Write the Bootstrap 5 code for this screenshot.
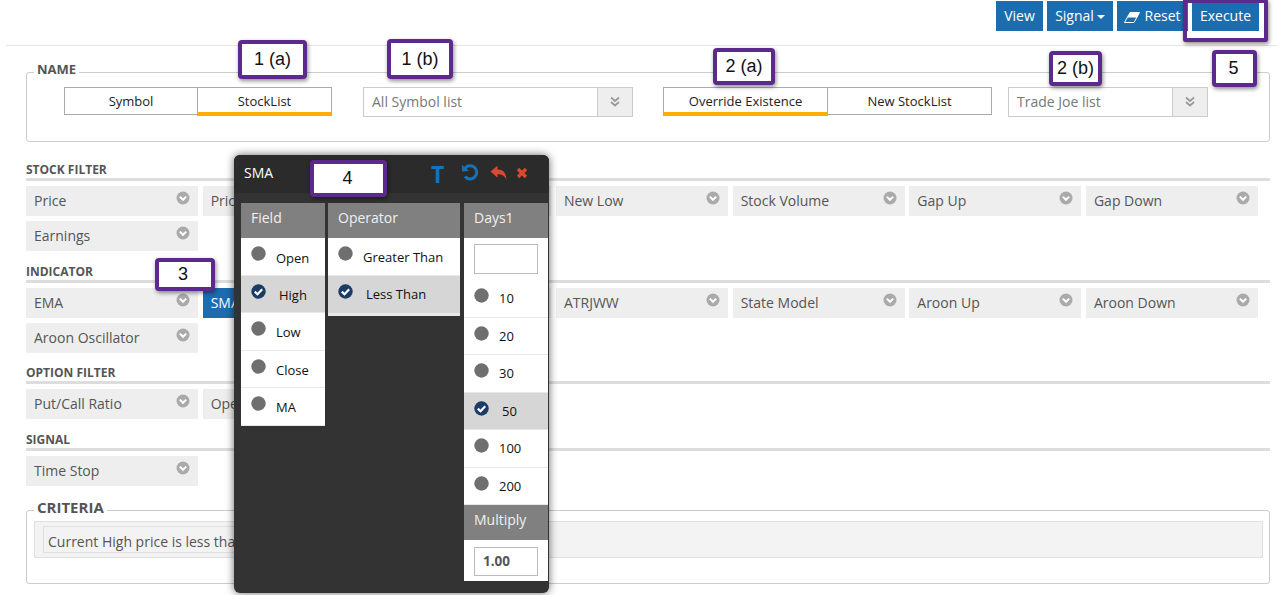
<!DOCTYPE html>
<html lang="en">
<head>
<meta charset="utf-8">
<title>Scan</title>
<link href="https://cdn.jsdelivr.net/npm/bootstrap@5.3.0/dist/css/bootstrap.min.css" rel="stylesheet">
<style>
html,body{height:595px;overflow:hidden;background:#fff}
body{font-family:"Open Sans","Liberation Sans",sans-serif;font-size:14px;color:#555;position:relative}
.topbar{height:30px;margin-top:1px;padding-right:18px}
.tb-btn{height:30px;padding:0;font-size:14px;line-height:30px;border:0;border-radius:0;background:#1b6db0;color:#fff;font-family:inherit;white-space:nowrap;flex:none}
.tb-btn:hover{background:#1b6db0;color:#fff}
.tb-btn.dropdown-toggle::after{vertical-align:2px;margin-left:3px;border-top-width:4px;border-left-width:4px;border-right-width:4px}
.tb-view{width:47px}
.tb-signal{width:66px}
.tb-reset{width:71px}
.tb-exec{width:67px}
.top-rule{height:1px;background:#e5e5e5;margin:14px 0 0 6px}
.fs{border:1px solid #ccc;border-radius:3px;margin:0 7px 0 26px;min-width:0;padding:0}
.fs legend{float:none;width:auto;padding:0 3px 6px;font-weight:700;color:#555;text-transform:uppercase}
.fs-name{margin-top:14px;padding:3px 0 24px 37px}
.fs-name legend{font-size:13px;line-height:18px;margin:0 0 0 -30px}
.seg{width:268px;flex:none}
.seg-wide{width:329px}
.btn-group>.seg-btn{height:28px;padding:0;flex:1 1 0;min-width:0;border:1px solid #aaa;border-radius:0;background:#fff;color:#222;font-size:13px;line-height:25px;font-family:inherit}
.btn-group>.seg-btn+.seg-btn{margin-left:-1px}
.btn-group>.seg-first{flex:0 0 134px}
.btn-group>.seg-on{height:29px;padding-top:1px;border-bottom:4px solid #fdae00}
.pick{height:30px;border:1px solid #ccc;flex:none;color:#777;background:#fff}
.pick-a{width:270px;margin:0 30px 0 31px}
.pick-b{width:200px;margin-left:16px}
.pick-text{padding-left:8px;line-height:28px;font-size:14px}
.pick-arrow{width:35px;background:#eee;border-left:1px solid #ccc}
.sect{margin:0 7px 0 26px}
.sect-title{margin:0;height:21px;padding-top:1px;border-bottom:3px solid #ddd;font-size:12px;line-height:18px;font-weight:700;color:#555;text-transform:uppercase}
.tiles{display:grid;grid-template-columns:repeat(7,172px);gap:5px 4.67px;margin-top:5px}
.tile{height:30px;background:#eee;padding:0 8px;line-height:29px;color:#555;font-size:14px;white-space:nowrap;overflow:hidden}
.tile svg{margin-top:5px;flex:none}
.tile-on{background:#1b6db0;color:#fff}
.mt-a{margin-top:18px}
.mt-b{margin-top:11px}
.mt-c{margin-top:10px}
.fs-crit{margin-top:11px;padding:0 6px 25px 7px}
.fs-crit legend{font-size:15px;line-height:20px;margin:0}
.crit-box{height:37px;margin-top:-2px;background:#f3f3f3;border:1px solid #e0e0e0;padding:4px 8px}
.crit-line{display:inline-block;height:27px;padding:0 4px;border:1px solid #e0e0e0;line-height:29px;color:#555;font-size:14px;white-space:nowrap}
.popup{position:absolute;left:234px;top:155px;width:315px;height:438px;background:#333;border-radius:6px;box-shadow:0 0 8px rgba(0,0,0,.6)}
.pop-head{height:38px;background:#2b2b2b;border-radius:6px 6px 0 0;padding-left:10px;color:#fff;font-size:14px;line-height:36px}
.pop-t{position:absolute;left:197px;top:5px;font:700 23px/28px "Open Sans",sans-serif;color:#1473bd}
.pop-ic{position:absolute;top:8px}
.pop-re{left:227px}
.pop-back{left:256px;top:10px}
.pop-x{left:282px;top:12px}
.pop-body{padding:10px 0 0 7px;gap:3px}
.pcol{flex:none;width:84px}
.pcol-w{width:132px}
.pcol-r{margin-left:1px}
.phead{height:35px;background:#808080;color:#f0f0f0;font-size:14px;line-height:29px;padding-left:10px}
.popt{height:37.5px;background:#fff;border-bottom:1px solid #e8e8e8;padding:8px 0 0 10px;color:#111;font-size:13px;border-radius:0}
.popt>span{margin:2px 0 0 10px;line-height:18px}
.popt:first-child>span{margin-top:3px}
.pcol-w .popt:first-child>span{margin-top:2px}
.pcol-r .popt>span,.pcol-r .popt:first-child>span{margin-top:1px}
.popt svg{flex:none}
.popt-on{background:#d6d6d6}
.popt-on>span{margin-left:13px}
.popt-end{height:40.5px;border-bottom:3px solid #e8e8e8}
.popt-end>span{margin-top:1px}
.pin{height:42px;background:#fff;padding:6px 10px 0}
.pin-last{height:41px;padding-top:7px}
.pinbox{display:block;width:64px;height:30px;border:1px solid #bbb;padding:0 8px;font:700 13.5px/28px "Open Sans",sans-serif;color:#555;background:#fff}
.pin-last .pinbox{height:29px;line-height:27px}
.tag{position:absolute;background:#fff;border:4px solid #5c2a8c;border-radius:4px;box-shadow:1px 2px 4px rgba(0,0,0,.45);color:#111;font:18px/1 "Liberation Sans",Arial,sans-serif;display:flex;align-items:center;justify-content:center;padding-bottom:1px}
.tag-1a{left:238px;top:40px;width:69px;height:39px}
.tag-1b{left:387px;top:39px;width:66px;height:40px}
.tag-2a{left:713px;top:48px;width:62px;height:37px}
.tag-2b{left:1049px;top:51px;width:53px;height:35px}
.tag-5{left:1212px;top:50px;width:45px;height:37px;padding-right:2px}
.tag-4{left:310px;top:160px;width:77px;height:37px;padding-right:2px}
.tag-3{left:155px;top:258px;width:60px;height:33px;padding-right:4px}
.tag-box{position:absolute;left:1183px;top:-1px;width:85px;height:43px;border:4px solid #5c2a8c;border-radius:2px;box-shadow:1px 2px 4px rgba(0,0,0,.45)}
</style>
</head>
<body>
<svg width="0" height="0" class="position-absolute">
  <defs>
    <symbol id="ic-chev" viewBox="0 0 14 14"><circle cx="7" cy="7" r="6.500" fill="#aaa"/><path d="M3.800 5.600 7 8.800l3.200-3.200" fill="none" stroke="#fff" stroke-width="2"/></symbol>
    <symbol id="ic-dbl" viewBox="0 0 12 12"><path d="M2 1.500 6 5l4-3.500M2 6 6 9.500 10 6" fill="none" stroke="#999" stroke-width="1.700"/></symbol>
    <symbol id="ic-off" viewBox="0 0 15 15"><circle cx="7.500" cy="7.500" r="7.200" fill="#6f6f6f"/></symbol>
    <symbol id="ic-on" viewBox="0 0 15 15"><circle cx="7.500" cy="7.500" r="7.200" fill="#1a3c66"/><path d="M3.800 7.600 6.500 10.200 11.200 5.300" fill="none" stroke="#fff" stroke-width="2.200"/></symbol>
  </defs>
</svg>

<div class="topbar d-flex justify-content-end gap-1">
  <button class="btn tb-btn tb-view">View</button>
  <button class="btn tb-btn tb-signal dropdown-toggle">Signal</button>
  <button class="btn tb-btn tb-reset"><svg width="16" height="11" viewBox="0 0 16 11" class="me-1"><path d="M.5 10.500 6 .5h9.500L10 10.500Z" fill="none" stroke="#fff"/><path d="M3.500 5.500 6 .5h9.500L13 5.500Z" fill="#fff"/></svg>Reset</button>
  <button class="btn tb-btn tb-exec">Execute</button>
</div>
<div class="top-rule"></div>

<fieldset class="fs fs-name">
  <legend>Name</legend>
  <div class="d-flex align-items-start">
    <div class="btn-group seg align-items-start">
      <button class="btn seg-btn seg-first">Symbol</button>
      <button class="btn seg-btn seg-on">StockList</button>
    </div>
    <div class="pick pick-a d-flex justify-content-between">
      <div class="pick-text">All Symbol list</div>
      <div class="pick-arrow d-flex align-items-center justify-content-center"><svg width="12" height="12"><use href="#ic-dbl"/></svg></div>
    </div>
    <div class="btn-group seg seg-wide align-items-start">
      <button class="btn seg-btn seg-on">Override Existence</button>
      <button class="btn seg-btn">New StockList</button>
    </div>
    <div class="pick pick-b d-flex justify-content-between">
      <div class="pick-text">Trade Joe list</div>
      <div class="pick-arrow d-flex align-items-center justify-content-center"><svg width="12" height="12"><use href="#ic-dbl"/></svg></div>
    </div>
  </div>
</fieldset>

<section class="sect mt-a">
  <h6 class="sect-title">Stock Filter</h6>
  <div class="tiles">
    <div class="tile d-flex justify-content-between align-items-start"><span>Price</span><svg width="14" height="14"><use href="#ic-chev"/></svg></div>
    <div class="tile d-flex justify-content-between align-items-start"><span>Price Change</span><svg width="14" height="14"><use href="#ic-chev"/></svg></div>
    <div class="tile d-flex justify-content-between align-items-start"><span>New High</span><svg width="14" height="14"><use href="#ic-chev"/></svg></div>
    <div class="tile d-flex justify-content-between align-items-start"><span>New Low</span><svg width="14" height="14"><use href="#ic-chev"/></svg></div>
    <div class="tile d-flex justify-content-between align-items-start"><span>Stock Volume</span><svg width="14" height="14"><use href="#ic-chev"/></svg></div>
    <div class="tile d-flex justify-content-between align-items-start"><span>Gap Up</span><svg width="14" height="14"><use href="#ic-chev"/></svg></div>
    <div class="tile d-flex justify-content-between align-items-start"><span>Gap Down</span><svg width="14" height="14"><use href="#ic-chev"/></svg></div>
    <div class="tile d-flex justify-content-between align-items-start"><span>Earnings</span><svg width="14" height="14"><use href="#ic-chev"/></svg></div>
  </div>
</section>

<section class="sect mt-b">
  <h6 class="sect-title">Indicator</h6>
  <div class="tiles">
    <div class="tile d-flex justify-content-between align-items-start"><span>EMA</span><svg width="14" height="14"><use href="#ic-chev"/></svg></div>
    <div class="tile tile-on d-flex justify-content-between align-items-start"><span>SMA</span></div>
    <div class="tile d-flex justify-content-between align-items-start"><span>RSI</span><svg width="14" height="14"><use href="#ic-chev"/></svg></div>
    <div class="tile d-flex justify-content-between align-items-start"><span>ATRJWW</span><svg width="14" height="14"><use href="#ic-chev"/></svg></div>
    <div class="tile d-flex justify-content-between align-items-start"><span>State Model</span><svg width="14" height="14"><use href="#ic-chev"/></svg></div>
    <div class="tile d-flex justify-content-between align-items-start"><span>Aroon Up</span><svg width="14" height="14"><use href="#ic-chev"/></svg></div>
    <div class="tile d-flex justify-content-between align-items-start"><span>Aroon Down</span><svg width="14" height="14"><use href="#ic-chev"/></svg></div>
    <div class="tile d-flex justify-content-between align-items-start"><span>Aroon Oscillator</span><svg width="14" height="14"><use href="#ic-chev"/></svg></div>
  </div>
</section>

<section class="sect mt-c">
  <h6 class="sect-title">Option Filter</h6>
  <div class="tiles">
    <div class="tile d-flex justify-content-between align-items-start"><span>Put/Call Ratio</span><svg width="14" height="14"><use href="#ic-chev"/></svg></div>
    <div class="tile d-flex justify-content-between align-items-start"><span>Open Interest</span><svg width="14" height="14"><use href="#ic-chev"/></svg></div>
  </div>
</section>

<section class="sect mt-b">
  <h6 class="sect-title">Signal</h6>
  <div class="tiles">
    <div class="tile d-flex justify-content-between align-items-start"><span>Time Stop</span><svg width="14" height="14"><use href="#ic-chev"/></svg></div>
  </div>
</section>

<fieldset class="fs fs-crit">
  <legend>Criteria</legend>
  <div class="crit-box"><span class="crit-line">Current High price is less than 50 days SMA</span></div>
</fieldset>

<div class="popup">
  <div class="pop-head">SMA</div>
  <span class="pop-t">T</span>
  <svg class="pop-ic pop-re" width="18" height="18" viewBox="0 0 18 18"><path d="M4 5.200A6.600 6.600 0 1 1 4 13.500" fill="none" stroke="#1473bd" stroke-width="3"/><path d="M.8 1.800 1.300 8.800 8 7.800Z" fill="#1473bd"/></svg>
  <svg class="pop-ic pop-back" width="17" height="16" viewBox="0 0 17 16"><path d="M.5 6.500 7.500.8v3.700c5.500 0 9 3 8.800 10.500C15 11 12 9.300 7.500 9.300V12.800Z" fill="#d9482f"/></svg>
  <svg class="pop-ic pop-x" width="12" height="12" viewBox="0 0 12 12"><path d="M2 2l8 8M10 2l-8 8" stroke="#d9482f" stroke-width="3.400"/></svg>
  <div class="pop-body d-flex align-items-start">
    <div class="pcol">
      <div class="phead">Field</div>
      <div class="list-group rounded-0">
        <div class="popt d-flex align-items-start"><svg width="15" height="15"><use href="#ic-off"/></svg><span>Open</span></div>
        <div class="popt popt-on d-flex align-items-start"><svg width="15" height="15"><use href="#ic-on"/></svg><span>High</span></div>
        <div class="popt d-flex align-items-start"><svg width="15" height="15"><use href="#ic-off"/></svg><span>Low</span></div>
        <div class="popt d-flex align-items-start"><svg width="15" height="15"><use href="#ic-off"/></svg><span>Close</span></div>
        <div class="popt d-flex align-items-start"><svg width="15" height="15"><use href="#ic-off"/></svg><span>MA</span></div>
      </div>
    </div>
    <div class="pcol pcol-w">
      <div class="phead">Operator</div>
      <div class="list-group rounded-0">
        <div class="popt d-flex align-items-start"><svg width="15" height="15"><use href="#ic-off"/></svg><span>Greater Than</span></div>
        <div class="popt popt-on popt-end d-flex align-items-start"><svg width="15" height="15"><use href="#ic-on"/></svg><span>Less Than</span></div>
      </div>
    </div>
    <div class="pcol pcol-r">
      <div class="phead">Days1</div>
      <div class="pin"><span class="pinbox"></span></div>
      <div class="list-group rounded-0">
        <div class="popt d-flex align-items-start"><svg width="15" height="15"><use href="#ic-off"/></svg><span>10</span></div>
        <div class="popt d-flex align-items-start"><svg width="15" height="15"><use href="#ic-off"/></svg><span>20</span></div>
        <div class="popt d-flex align-items-start"><svg width="15" height="15"><use href="#ic-off"/></svg><span>30</span></div>
        <div class="popt popt-on d-flex align-items-start"><svg width="15" height="15"><use href="#ic-on"/></svg><span>50</span></div>
        <div class="popt d-flex align-items-start"><svg width="15" height="15"><use href="#ic-off"/></svg><span>100</span></div>
        <div class="popt d-flex align-items-start"><svg width="15" height="15"><use href="#ic-off"/></svg><span>200</span></div>
      </div>
      <div class="phead">Multiply</div>
      <div class="pin pin-last"><span class="pinbox">1.00</span></div>
    </div>
  </div>
</div>

<div class="tag tag-1a">1 (a)</div>
<div class="tag tag-1b">1 (b)</div>
<div class="tag tag-2a">2 (a)</div>
<div class="tag tag-2b">2 (b)</div>
<div class="tag tag-5">5</div>
<div class="tag tag-4">4</div>
<div class="tag tag-3">3</div>
<div class="tag-box"></div>
</body>
</html>
